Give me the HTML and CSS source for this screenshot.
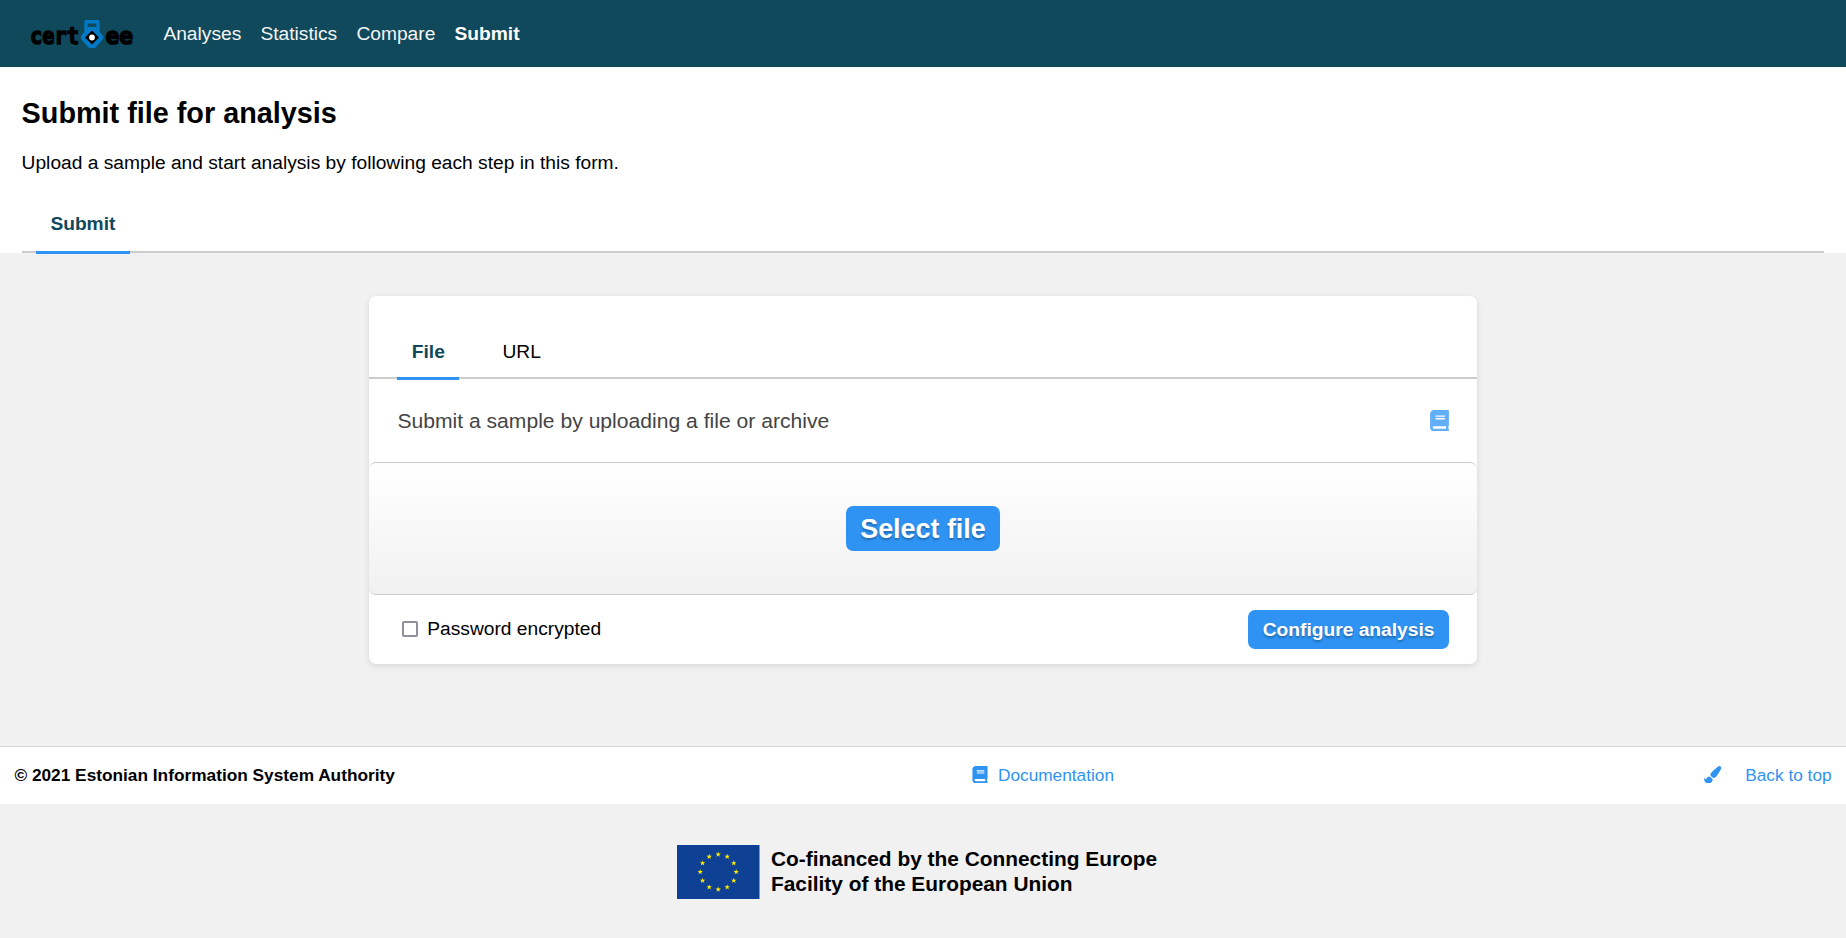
FILE: index.html
```html
<!DOCTYPE html>
<html lang="en">
<head>
<meta charset="utf-8">
<title>Submit file for analysis</title>
<link rel="stylesheet" href="styles.css">
</head>
<body>
<svg class="defs" width="0" height="0" aria-hidden="true">
  <symbol id="book" viewBox="0 0 448 512"><path d="M448 360V24c0-13.3-10.7-24-24-24H96C43 0 0 43 0 96v320c0 53 43 96 96 96h328c13.3 0 24-10.7 24-24v-16c0-7.5-3.5-14.3-8.9-18.7-4.2-15.4-4.2-59.3 0-74.7 5.4-4.3 8.9-11.1 8.9-18.6zM128 134c0-3.3 2.7-6 6-6h212c3.3 0 6 2.7 6 6v20c0 3.3-2.7 6-6 6H134c-3.3 0-6-2.7-6-6v-20zm0 64c0-3.3 2.7-6 6-6h212c3.3 0 6 2.7 6 6v20c0 3.3-2.7 6-6 6H134c-3.3 0-6-2.7-6-6v-20zm253.400 250H96c-17.700 0-32-14.300-32-32 0-17.600 14.400-32 32-32h285.400c-1.900 17.100-1.900 46.900 0 64z"/></symbol>
  <symbol id="star" viewBox="-10 -10 20 20"><path d="M0-10 2.300-3.100H9.500L3.700 1.200 5.900 8.100 0 3.800-5.900 8.100-3.700 1.200-9.500-3.100H-2.300z"/></symbol>
</svg>
<header class="navbar">
  <svg class="logo" viewBox="0 0 110 32" role="img" aria-label="cert ee">
    <g class="logo-text">
      <text x="0" y="25.500" textLength="49" lengthAdjust="spacingAndGlyphs">cert</text>
      <text x="75.500" y="25.500" textLength="27.500" lengthAdjust="spacingAndGlyphs">ee</text>
    </g>
    <path class="logo-shackle" d="M56 14V3.700h12V14"/>
    <path class="logo-body" d="M58.500 9.500h7L72.500 18v3l-7.500 8.500h-6L51.500 21v-3z"/>
    <path d="M62 12.500 69 19.500 62 26.500 55 19.500z"/>
    <circle class="logo-eye" cx="62" cy="19.500" r="2.900"/>
  </svg>
  <nav class="nav">
    <a>Analyses</a><a>Statistics</a><a>Compare</a><a class="active">Submit</a>
  </nav>
</header>
<section class="intro">
  <h1>Submit file for analysis</h1>
  <p>Upload a sample and start analysis by following each step in this form.</p>
  <div class="tabs page-tabs"><a class="tab active">Submit</a></div>
</section>
<main>
  <form class="card">
    <div class="tabs card-tabs"><a class="tab active">File</a><a class="tab">URL</a></div>
    <div class="card-title">
      <span>Submit a sample by uploading a file or archive</span>
      <svg class="help"><use href="#book"/></svg>
    </div>
    <div class="dropzone"><button type="button" class="button large">Select file</button></div>
    <div class="actions">
      <label><span class="checkbox"></span>Password encrypted</label>
      <button type="button" class="button">Configure analysis</button>
    </div>
  </form>
</main>
<footer class="footer">
  <strong>© 2021 Estonian Information System Authority</strong>
  <a class="docs"><svg><use href="#book"/></svg>Documentation</a>
  <div class="tools">
    <svg viewBox="0 0 512 512"><path d="M167.020 309.340c-40.120 2.580-76.530 17.860-97.190 72.300-2.350 6.210-8 9.980-14.590 9.980-11.110 0-45.460-27.670-55.250-34.350C0 439.620 37.930 512 128 512c75.860 0 128-43.770 128-120.190 0-3.110-.65-6.080-.97-9.130l-88.010-73.340zM457.890 0c-15.160 0-29.370 6.710-40.210 16.450C213.270 199.050 192 203.340 192 257.090c0 13.700 3.250 26.760 8.730 38.700l63.820 53.180c7.210 1.800 14.640 3.030 22.390 3.030 62.110 0 98.110-45.470 211.160-256.460 7.380-14.350 13.900-29.850 13.900-45.990C512 20.640 486 0 457.890 0z"/></svg>
    <a>Back to top</a>
  </div>
</footer>
<div class="funding">
  <svg class="flag" viewBox="0 0 83 54">
    <rect width="82.500" height="54"/>
    <g>
      <use href="#star" x="38.300" y="6.400" width="5.800" height="5.800"/>
      <use href="#star" x="47.300" y="8.700" width="5.800" height="5.800"/>
      <use href="#star" x="53.900" y="15.200" width="5.800" height="5.800"/>
      <use href="#star" x="56.300" y="24" width="5.800" height="5.800"/>
      <use href="#star" x="53.900" y="32.800" width="5.800" height="5.800"/>
      <use href="#star" x="47.300" y="39.300" width="5.800" height="5.800"/>
      <use href="#star" x="38.300" y="41.600" width="5.800" height="5.800"/>
      <use href="#star" x="29.300" y="39.300" width="5.800" height="5.800"/>
      <use href="#star" x="22.700" y="32.800" width="5.800" height="5.800"/>
      <use href="#star" x="20.300" y="24" width="5.800" height="5.800"/>
      <use href="#star" x="22.700" y="15.200" width="5.800" height="5.800"/>
      <use href="#star" x="29.300" y="8.700" width="5.800" height="5.800"/>
    </g>
  </svg>
  <p>Co-financed by the Connecting Europe<br>Facility of the European Union</p>
</div>
</body>
</html>
```

FILE: styles.css
```css
* { box-sizing: border-box; }
body {
  margin: 0;
  min-height: 938px;
  background: #f1f1f1;
  color: #000;
  font: 19.2px/24px "Liberation Sans", Arial, sans-serif;
}
h1, p { margin: 0; }
.defs { position: absolute; }
.navbar {
  display: flex;
  align-items: center;
  height: 67px;
  padding-left: 30px;
  background: #10495c;
}
.logo { width: 110px; height: 32px; }
.logo-text {
  font: bold 23px/32px "DejaVu Sans Mono", monospace;
  stroke: #000;
  stroke-width: 1.5;
}
.logo-shackle { fill: none; stroke: #0079c6; stroke-width: 3.4; stroke-linejoin: round; }
.logo-body { fill: #0079c6; stroke: #0079c6; stroke-linejoin: round; }
.logo-eye { fill: #fff; }
.nav { display: flex; gap: 19.2px; margin-left: 23.400px; color: #f5f5f5; }
.active { font-weight: bold; }
.nav .active { color: #fff; }

.intro { height: 186px; padding: 28px 21.600px 0; background: #fff; }
h1 { font-size: 28.800px; line-height: 36px; }
.intro p { margin-top: 20px; }
.tabs { display: flex; gap: 28.800px; border-bottom: 2px solid #ccc; }
.tab { padding: 14.400px 14.400px 0; height: 55px; margin-bottom: -3px; }
.tab.active { color: #10495c; border-bottom: 3px solid #2e93f2; }
.page-tabs { margin-top: 24px; padding-left: 14.400px; }
.page-tabs .tab { padding-top: 13.400px; }

main { padding-top: 43px; height: 493px; }
.card {
  width: 1108px;
  height: 368px;
  margin: 0 auto;
  background: #fff;
  border-radius: 7.200px;
  box-shadow: 0 2px 6px rgba(0, 0, 0, .11);
}
.card-tabs { height: 83px; padding: 29px 28.400px 0; }
.card-tabs .tab { padding-top: 15.400px; }
.card-title {
  display: flex;
  align-items: center;
  justify-content: space-between;
  height: 83px;
  padding: 0 28px 0 28.400px;
  color: #444;
  font-size: 21.120px;
}
.help { width: 19px; height: 21.500px; fill: #62aef8; }
.dropzone {
  display: flex;
  align-items: center;
  justify-content: center;
  height: 133px;
  border-top: 1px solid #ccc;
  border-bottom: 1px solid #ccc;
  border-radius: 7.200px;
  background: linear-gradient(#fff, #f1f1f1);
}
.button {
  height: 39px;
  padding: 0 14.600px;
  border: 0;
  border-radius: 7.200px;
  background: #2e93f2;
  color: #fff;
  font: bold 19.200px "Liberation Sans", Arial, sans-serif;
  text-shadow: 0 2px 2px rgba(0, 0, 0, .27);
}
.large { height: 45px; padding: 1px 14.400px 0; font-size: 26.880px; }
.actions {
  display: flex;
  align-items: center;
  justify-content: space-between;
  height: 69px;
  padding: 0 28px 0 33px;
}
.actions label { display: flex; align-items: center; gap: 9.300px; margin-bottom: 2px; }
.checkbox { width: 16px; height: 16px; border: 2px solid #8f8f9d; border-radius: 2px; }

.footer {
  display: grid;
  grid-template-columns: 1fr auto 1fr;
  align-items: center;
  height: 58px;
  padding: 0 14.400px 2px;
  border-top: 1px solid #d5d5d5;
  background: #fff;
  font-size: 17.280px;
}
.footer a { color: #2e93f2; }
.footer svg { fill: #2e93f2; height: 17.300px; }
.docs { display: flex; align-items: center; gap: 10px; margin-left: 240px; }
.docs svg { width: 16px; }
.tools { display: flex; align-items: center; justify-content: flex-end; gap: 24px; }
.tools svg { width: 17.300px; }
.funding { display: flex; padding: 41px 0 0 677px; gap: 11px; }
.flag { width: 83px; height: 54px; flex: none; }
.flag rect { fill: #0e4194; }
.flag g { fill: #ffed00; }
.funding p { padding-top: 1px; font-size: 20.880px; line-height: 25px; font-weight: bold; }
```
